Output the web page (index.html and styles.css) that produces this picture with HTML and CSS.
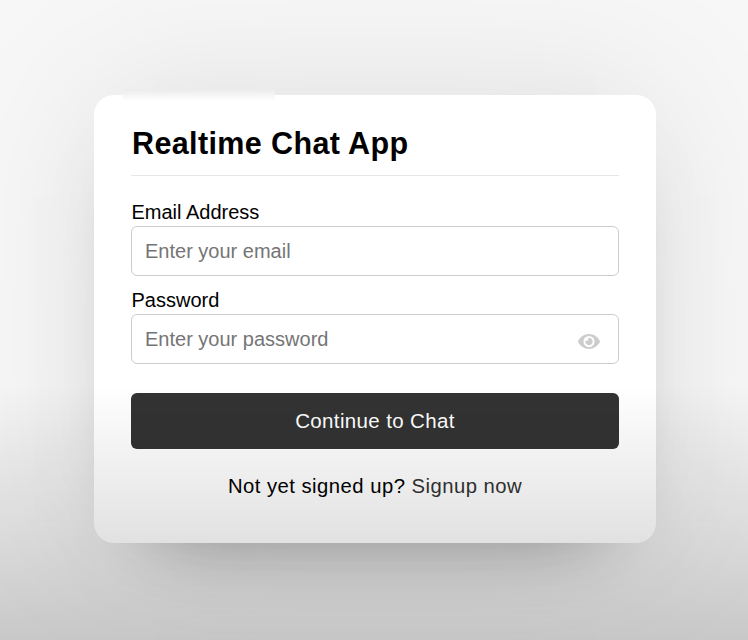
FILE: index.html
```html
<!DOCTYPE html>
<html lang="en">
<head>
<meta charset="utf-8">
<title>Realtime Chat App</title>
<link rel="stylesheet" href="styles.css">
</head>
<body>
<main class="card">
  <h1 class="title">Realtime Chat App</h1>
  <form class="form">
    <div class="field">
      <label class="label" for="email">Email Address</label>
      <input class="input" id="email" type="text" placeholder="Enter your email">
    </div>
    <div class="field">
      <label class="label" for="password">Password</label>
      <input class="input" id="password" type="password" placeholder="Enter your password">
      <svg class="eye" viewBox="0 64 576 384" preserveAspectRatio="none" aria-hidden="true"><path fill="currentColor" d="M572.52 241.4C518.29 135.59 410.93 64 288 64S57.68 135.64 3.48 241.41a32.35 32.35 0 0 0 0 29.19C57.71 376.41 165.07 448 288 448s230.32-71.64 284.52-177.41a32.35 32.35 0 0 0 0-29.19zM288 400a144 144 0 1 1 144-144 143.93 143.93 0 0 1-144 144zm0-240a95.31 95.31 0 0 0-25.31 3.79 47.85 47.85 0 0 1-66.9 66.9A95.78 95.78 0 1 0 288 160z"/></svg>
    </div>
    <button class="button" type="button">Continue to Chat</button>
  </form>
  <p class="link">Not yet signed up? <a class="signup" href="#">Signup now</a></p>
</main>
<div class="shade"></div>
</body>
</html>
```
FILE: styles.css
```css
* { box-sizing: border-box; margin: 0; padding: 0; }
body {
  height: 640px;
  padding: 95px 92px 0 94px;
  overflow: hidden;
  background: #f7f7f7;
  color: #000;
  font-family: "Liberation Sans", Arial, sans-serif;
}
.card {
  position: relative;
  height: 448px;
  padding: 31px 37px 0;
  border-radius: 20px;
  background: #fff;
  box-shadow: 0 0 160px 0 rgba(0,0,0,.1), 0 40px 80px -60px rgba(0,0,0,.5);
}
/* soft highlight along the card's top edge */
.card::before {
  content: "";
  position: absolute;
  left: 29px;
  top: -6px;
  width: 152px;
  height: 12px;
  background: linear-gradient(#ebebeb, #f4f4f4 45%, #fff);
}
.title {
  height: 50px;
  padding-left: 1px;
  border-bottom: 1px solid #e6e6e6;
  font-size: 30.5px;
  line-height: 35px;
  letter-spacing: .38px;
  font-weight: 700;
}
.form { padding-top: 24px; }
.field {
  position: relative;
  display: flex;
  flex-direction: column;
  margin-bottom: 12px;
}
.label { height: 26px; padding-left: .5px; font-size: 20px; line-height: 24px; }
.input {
  width: 100%;
  height: 50px;
  padding: 0 13px;
  border: 1px solid #ccc;
  border-radius: 6px;
  background: #fff;
  font: 20px "Liberation Sans", Arial, sans-serif;
}
.input::placeholder { color: #757575; opacity: 1; }
.eye {
  position: absolute;
  right: 19px;
  top: 46px;
  width: 22px;
  height: 15px;
  color: #ccc;
}
.button {
  display: block;
  width: 100%;
  height: 56px;
  margin-top: 29px;
  border: 0;
  border-radius: 6px;
  background: #333;
  color: #fff;
  font: 20.5px "Liberation Sans", Arial, sans-serif;
  letter-spacing: .36px;
}
.link {
  margin-top: 25px;
  text-align: center;
  font-size: 20.25px;
  line-height: 24px;
  letter-spacing: .48px;
}
.signup { color: #333; text-decoration: none; }
.shade {
  position: fixed;
  inset: 385px 0 0;
  background: linear-gradient(transparent, rgba(0,0,0,.19));
  pointer-events: none;
}
```
